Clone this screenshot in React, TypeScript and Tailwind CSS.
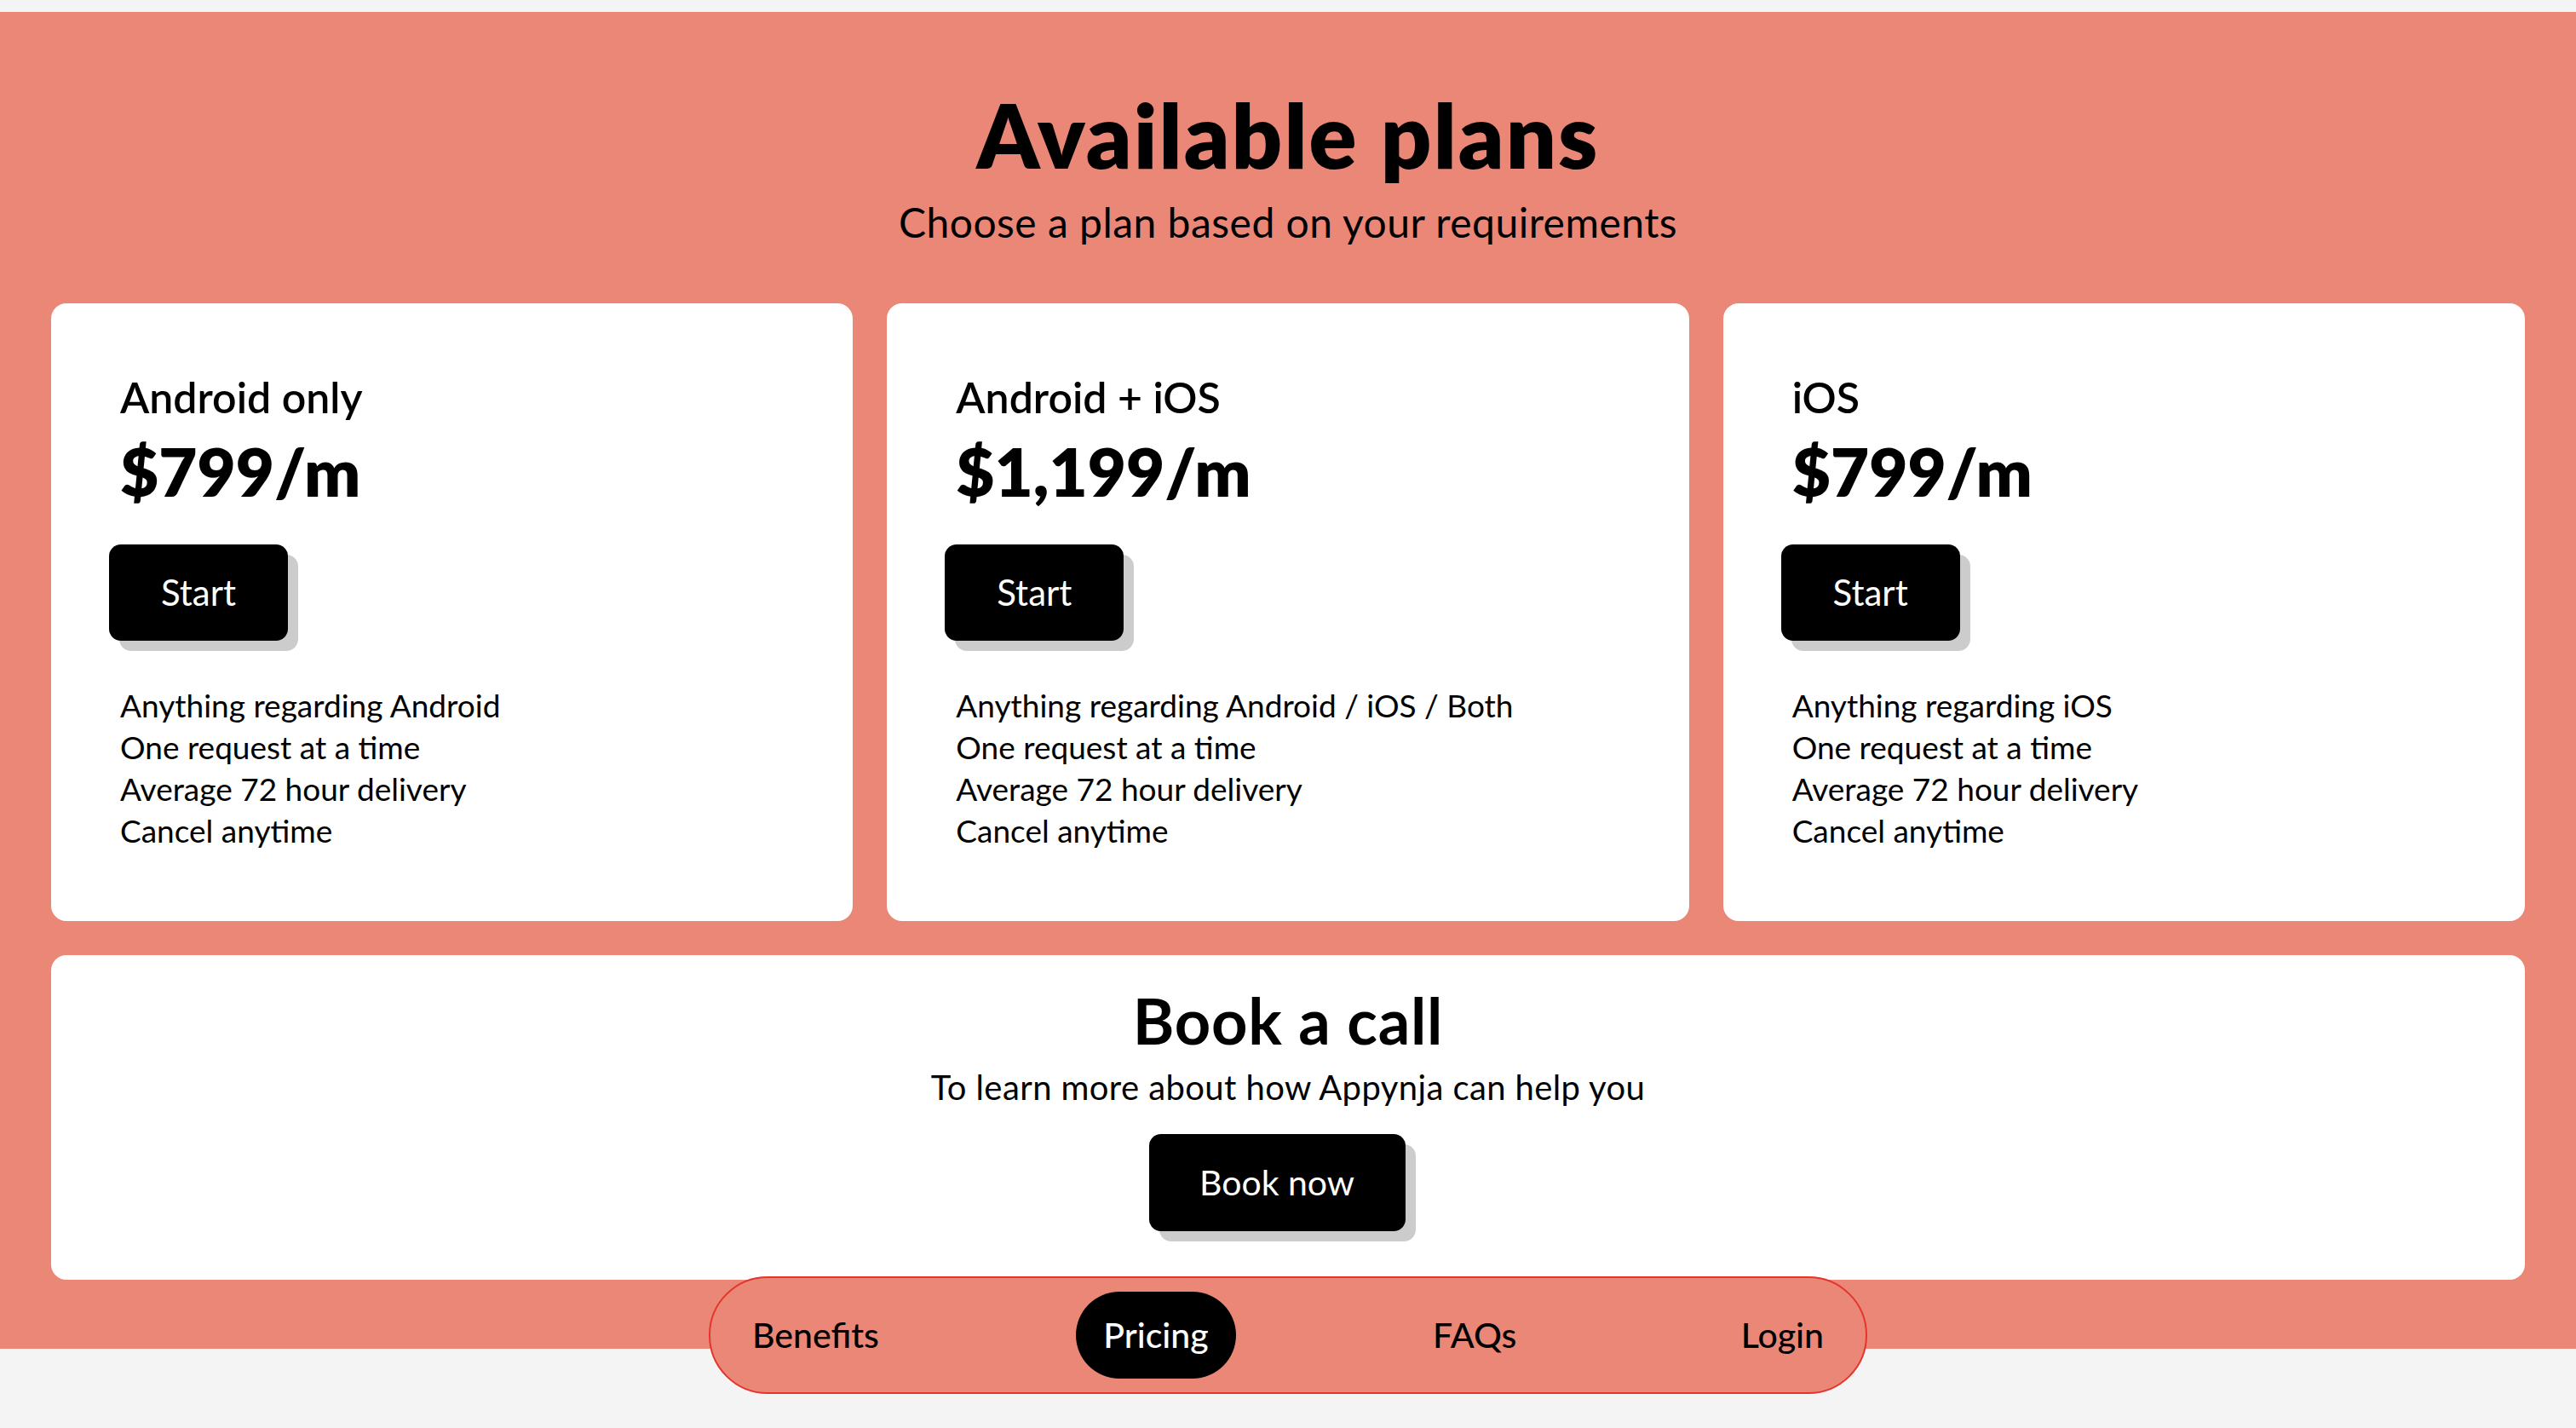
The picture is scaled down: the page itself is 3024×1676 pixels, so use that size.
const plans = [
  {
    name: "Android only",
    price: "$799/m",
    features: ["Anything regarding Android", "One request at a time", "Average 72 hour delivery", "Cancel anytime"],
  },
  {
    name: "Android + iOS",
    price: "$1,199/m",
    features: ["Anything regarding Android / iOS / Both", "One request at a time", "Average 72 hour delivery", "Cancel anytime"],
  },
  {
    name: "iOS",
    price: "$799/m",
    features: ["Anything regarding iOS", "One request at a time", "Average 72 hour delivery", "Cancel anytime"],
  },
];

const navItems = ["Benefits", "Pricing", "FAQs", "Login"];

function PlanCard({ plan }: { plan: (typeof plans)[number] }) {
  return (
    <div className="flex h-[725px] flex-col rounded-[18px] bg-white px-[81px] pt-[85px]">
      <h3 className="text-[50px] font-semibold leading-none">{plan.name}</h3>
      <div className="mt-[23px] text-[78px] font-extrabold leading-none">{plan.price}</div>
      <div className="mt-[47px]">
        <button className="h-[113px] w-[210px] -translate-x-[13px] rounded-[14px] bg-black text-[42px] text-white shadow-[12px_12px_0_#cccccc]">
          Start
        </button>
      </div>
      <ul className="mt-[51px] text-[37px] leading-[49px]">
        {plan.features.map((f) => (
          <li key={f}>{f}</li>
        ))}
      </ul>
    </div>
  );
}

export default function App() {
  return (
    <div className="min-h-screen bg-[#f4f4f4] pt-[14px] font-['Lato',sans-serif] text-black">
      <section className="bg-[#ea8777] px-[60px] pt-[92px] pb-[81px]">
        <h1 className="text-center text-[104px] font-extrabold leading-none tracking-[0.02em]">Available plans</h1>
        <p className="mt-[27px] text-center text-[48px] leading-none tracking-[0.01em]">Choose a plan based on your requirements</p>

        <div className="mt-[71px] grid grid-cols-3 gap-[40px]">
          {plans.map((p) => (
            <PlanCard key={p.name} plan={p} />
          ))}
        </div>

        <div className="mt-[40px] flex h-[381px] flex-col items-center rounded-[18px] bg-white pt-[40px]">
          <h2 className="text-[74px] font-bold leading-none tracking-[0.01em]">Book a call</h2>
          <p className="mt-[21px] text-[40px] leading-none tracking-[0.01em]">To learn more about how Appynja can help you</p>
          <button className="mt-[35px] h-[114px] w-[301px] -translate-x-[13px] rounded-[14px] bg-black text-[41px] text-white shadow-[12px_12px_0_#cccccc]">
            Book now
          </button>
        </div>
      </section>

      <nav className="fixed bottom-[40px] left-1/2 flex h-[138px] w-[1360px] -translate-x-1/2 items-center justify-between rounded-full border-2 border-[#e5352a] bg-[#ea8777] px-[17px]">
        {navItems.map((item) => (
          <a
            key={item}
            className={`flex h-[102px] items-center rounded-full px-[32px] text-[41px] font-medium ${
              item === "Pricing" ? "bg-black text-white" : "text-black"
            }`}
          >
            {item}
          </a>
        ))}
      </nav>
    </div>
  );
}
